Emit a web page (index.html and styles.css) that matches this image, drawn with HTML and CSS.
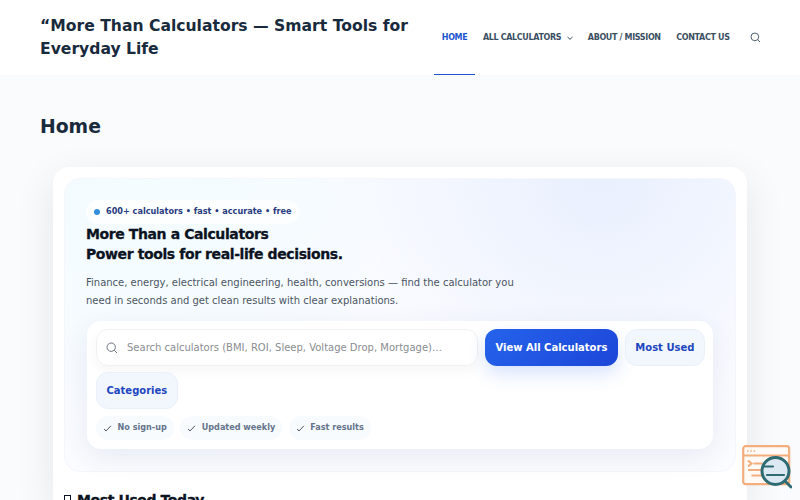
FILE: index.html
```
<!DOCTYPE html>
<html lang="en">
<head>
	<meta charset="utf-8">
	<title>More Than Calculators</title>
	<link rel="stylesheet" href="styles.css">
</head>
<body>
<header class="header">
	<a class="site-title">“More Than Calculators — Smart Tools for Everyday Life</a>
	<nav class="menu">
		<a class="active">Home</a>
		<a>All Calculators <svg class="arrow" viewBox="0 0 8 8"><path d="M1.5 3 4 5.300 6.5 3"/></svg></a>
		<a>About / Mission</a>
		<a>Contact Us</a>
	</nav>
	<svg class="search-toggle" viewBox="0 0 12 12"><circle cx="5.3" cy="5.3" r="4.2"/><path d="m8.4 8.4 2.5 2.5"/></svg>
</header>
<main>
	<h1 class="page-title">Home</h1>
	<div class="wrap">
		<section class="hero">
			<div class="badge"><i class="dot"></i>600+ calculators • fast • accurate • free</div>
			<h2>More Than a Calculators<br>Power tools for real-life decisions.</h2>
			<p class="lead">Finance, energy, electrical engineering, health, conversions — find the calculator you need in seconds and get clean results with clear explanations.</p>
			<div class="panel">
				<div class="row">
					<div class="field">
						<svg viewBox="0 0 12 12"><circle cx="5.2" cy="5.2" r="4.2"/><path d="m8.3 8.3 2.7 2.7"/></svg>
						<span>Search calculators (BMI, ROI, Sleep, Voltage Drop, Mortgage)…</span>
					</div>
					<a class="btn primary">View All Calculators</a>
					<a class="btn">Most Used</a>
					<a class="btn">Categories</a>
				</div>
				<div class="chips">
					<span class="chip"><svg viewBox="0 0 10 10"><path d="m1.2 5.6 2.2 2.1L8.800 2"/></svg>No sign-up</span>
					<span class="chip"><svg viewBox="0 0 10 10"><path d="m1.2 5.6 2.2 2.1L8.800 2"/></svg>Updated weekly</span>
					<span class="chip"><svg viewBox="0 0 10 10"><path d="m1.2 5.6 2.2 2.1L8.800 2"/></svg>Fast results</span>
				</div>
			</div>
		</section>
		<h2 class="section-title"><i class="box"></i>Most Used Today</h2>
	</div>
</main>
<svg class="float-icon" viewBox="0 0 50 44">
	<g fill="none" stroke="#f2ae7c" stroke-width="2.2">
		<rect x="1.2" y="1.2" width="46" height="38" rx="2.5" fill="#fffaf6"/>
		<path d="M1 10.500h46"/>
		<path d="M5 6h8" stroke-dasharray="1.5 1.8" stroke-width="1.5"/>
		<path d="m6 15.500 3.500 3-3.500 3M11.500 18.500h9M6 25h15M9.500 30.500h11"/>
	</g>
	<g stroke="#2f6b73" fill="none" stroke-linecap="round">
		<circle cx="33.500" cy="26" r="13.500" fill="#dce9f2" stroke-width="3"/>
		<path d="M21 21.500h10M25 30h17" stroke-width="2.200"/>
		<path d="m43 36 6 6" stroke-width="3"/>
	</g>
</svg>
</body>
</html>
```

FILE: styles.css
```
*{box-sizing:border-box;}
body,h1,h2,p{margin:0;}
html,body{height:100%;overflow:hidden;}
body{background:#fafbfd;color:#192a3d;font:10px/1.65 "DejaVu Sans",sans-serif;}
svg{fill:none;stroke:currentColor;flex:none;}

.header{display:flex;align-items:center;height:75px;padding:0 39px 0 40px;background:#fff;}
.site-title{width:394px;font-size:15.6px;line-height:23px;font-weight:bold;}
.menu{display:flex;height:75px;}
.menu a{display:flex;align-items:center;padding:0 7.8px;color:#3b4f63;font-size:8px;font-weight:bold;letter-spacing:-.35px;text-transform:uppercase;white-space:nowrap;}
.menu .active{padding-top:1px;color:#1e56cf;border-bottom:1px solid #1e56cf;}
.arrow{width:8px;height:8px;margin:0 -2px 0 5px;}
.search-toggle{width:11px;height:11px;margin-left:auto;color:#3b4f63;}

.page-title{margin:38px 40px 0;font-size:18.8px;line-height:28px;}
.wrap{margin:26px 53px 0;height:333px;padding:11px;background:#fff;border-radius:16px 16px 0 0;box-shadow:0 12px 40px rgba(0,0,0,.09);}
.hero{height:294px;padding:21px;border:1px solid #f4f6fb;border-radius:16px;background:radial-gradient(circle at 80% 0,rgba(37,99,235,.07),transparent 40%),radial-gradient(circle at 12% 0,#f3fcff,transparent 45%),linear-gradient(#f8faff,#fbfcff);}
.badge{display:flex;align-items:center;width:213px;height:24px;padding-left:8px;background:rgba(255,255,255,.8);border-radius:12px;color:#273b80;font-size:8.150px;font-weight:bold;white-space:nowrap;}
.dot{width:6px;height:6px;margin-right:6px;border-radius:50%;background:#328edb;}
.hero h2,.section-title{font-size:14px;line-height:20px;font-weight:900;letter-spacing:-.4px;-webkit-text-stroke:.3px;color:#0b1221;white-space:nowrap;}
.lead{width:440px;margin-top:10px;color:#4b5563;line-height:17.5px;}
.panel{height:128px;margin:12px 1px 0;padding:8px 7px 8px 9px;background:#fff;border-radius:14px;box-shadow:0 8px 28px rgba(30,50,130,.09);}
.row{display:flex;flex-wrap:wrap;gap:6px 7px;}
.field{display:flex;align-items:center;width:382px;height:37px;padding-left:9px;border:1px solid #f0f1f3;border-radius:12px;color:#6b7280;box-shadow:0 5px 12px rgba(0,0,0,.04);}
.field svg{width:12px;height:12px;margin-right:9px;}
.field span{padding-top:1px;color:#8a8d92;white-space:nowrap;}
.btn{display:flex;align-items:center;height:37px;padding:1px 9.5px 0;border:1px solid #e9f0fa;border-radius:12px;background:#f2f7fd;color:#1d46c0;font-weight:bold;white-space:nowrap;}
.primary{border-color:transparent;background:linear-gradient(135deg,#2563eb,#1d46d8) border-box;color:#fff;box-shadow:0 8px 18px rgba(37,99,235,.18);}
.chips{display:flex;gap:6.5px;margin-top:7px;}
.chip{display:flex;align-items:center;height:24px;padding:0 7px;border-radius:12px;background:#f8fbfe;color:#64748b;font-size:8.1px;font-weight:bold;white-space:nowrap;}
.chip svg{width:9px;height:9px;margin-right:5.5px;color:#374151;}
.section-title{display:flex;align-items:center;height:21px;margin-top:17px;}
.box{width:7px;height:10px;margin-right:6px;border:1px solid #0b1221;}
.float-icon{position:fixed;right:8px;bottom:11px;width:50px;height:44px;}
```
